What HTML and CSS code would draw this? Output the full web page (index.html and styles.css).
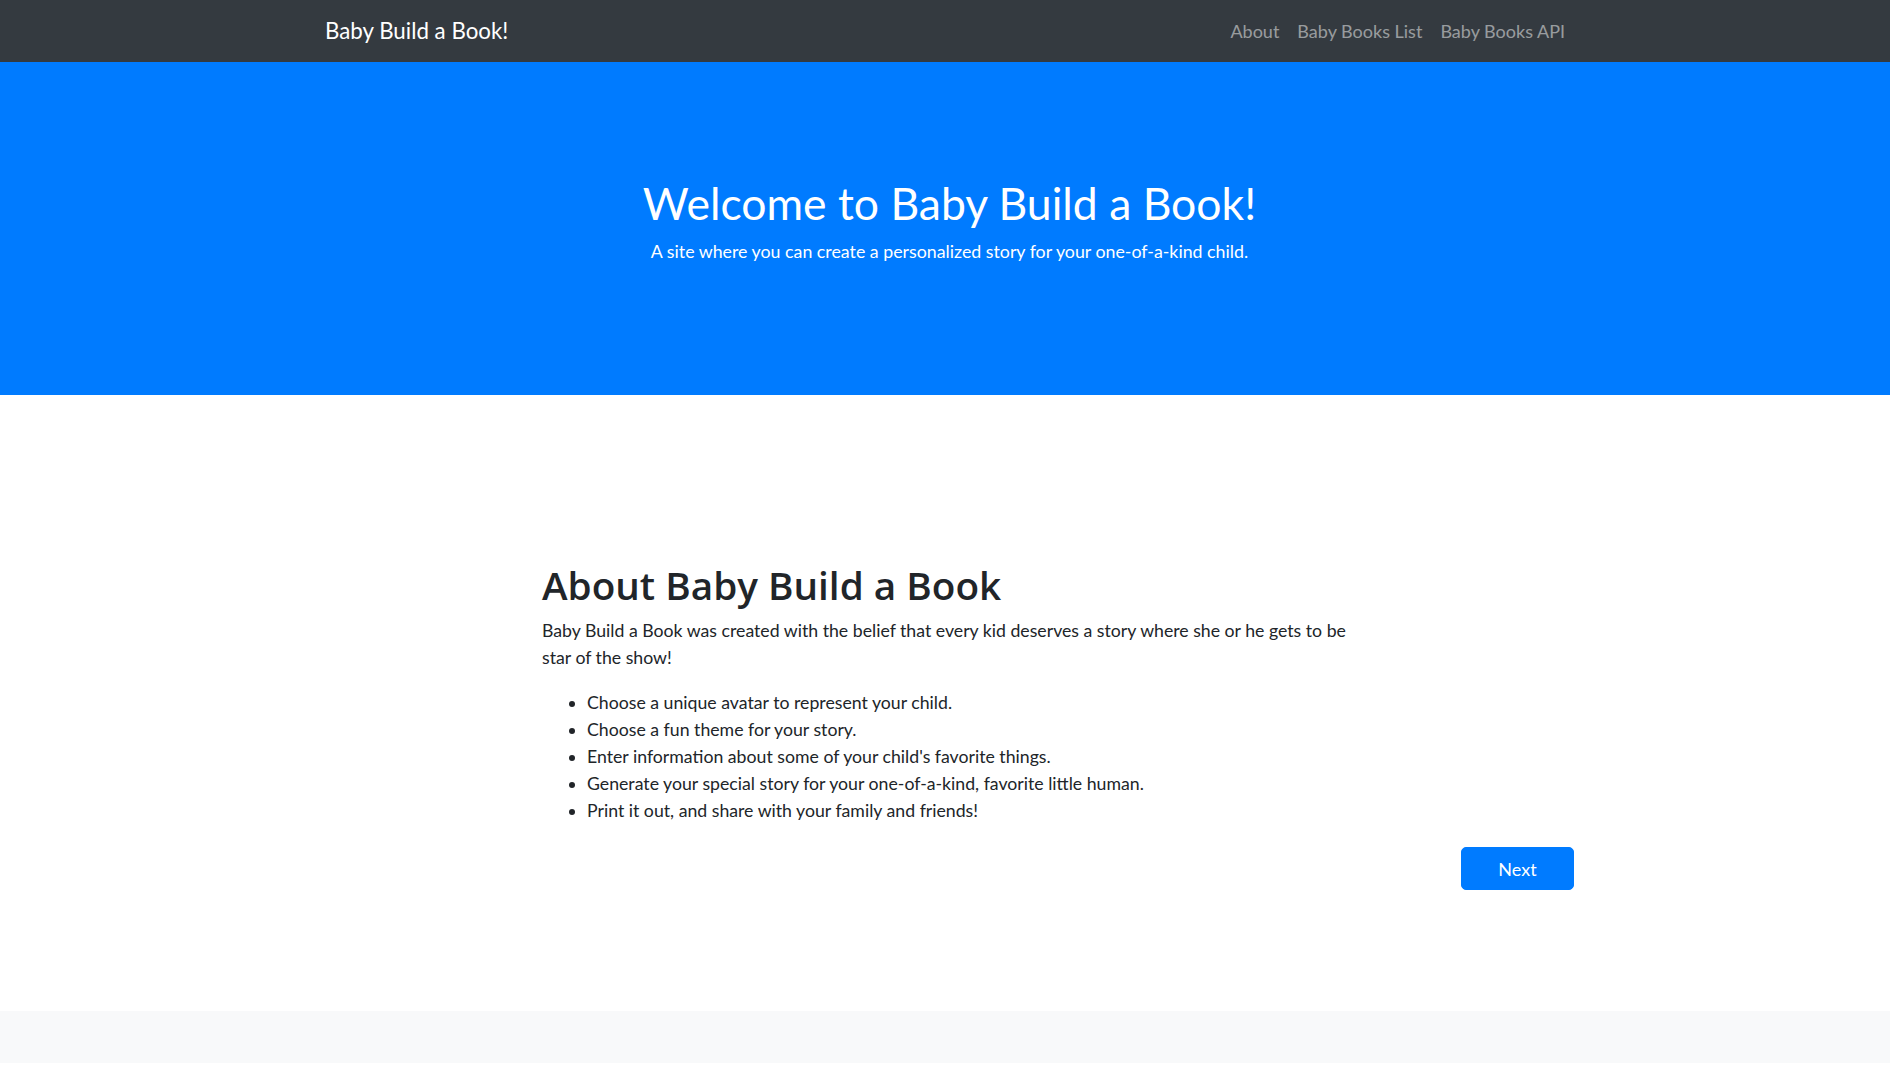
FILE: index.html
```html
<!DOCTYPE html>
<html lang="en">
<head>
<meta charset="utf-8">
<title>Baby Build a Book!</title>
<link rel="stylesheet" href="styles.css">
</head>
<body>
<nav class="navbar">
  <div class="nav-inner">
    <a class="brand" href="#">Baby Build a Book!</a>
    <ul class="nav-links">
      <li><a href="#">About</a></li>
      <li><a href="#">Baby Books List</a></li>
      <li><a href="#">Baby Books API</a></li>
    </ul>
  </div>
</nav>
<header class="hero">
  <h1 class="hero-title">Welcome to Baby Build a Book!</h1>
  <p class="hero-lead">A site where you can create a personalized story for your one-of-a-kind child.</p>
</header>
<main class="main">
  <div class="row">
    <section class="about">
      <div class="about-text">
        <h2 class="about-title">About Baby Build a Book</h2>
        <p>Baby Build a Book was created with the belief that every kid deserves a story where she or he gets to be star of the show!</p>
        <ul class="steps">
          <li>Choose a unique avatar to represent your child.</li>
          <li>Choose a fun theme for your story.</li>
          <li>Enter information about some of your child's favorite things.</li>
          <li>Generate your special story for your one-of-a-kind, favorite little human.</li>
          <li>Print it out, and share with your family and friends!</li>
        </ul>
      </div>
      <div class="actions">
        <button class="btn-next" type="button">Next</button>
      </div>
    </section>
  </div>
</main>
<footer class="footer"></footer>
</body>
</html>
```

FILE: styles.css
```css
* { box-sizing: border-box; }

html, body {
  margin: 0;
  padding: 0;
}

body {
  font-family: Lato, "Open Sans", "Liberation Sans", sans-serif;
  font-size: 17.7px;
  line-height: 27px;
  color: #212529;
  background: #fff;
}

.navbar {
  background: #343a40;
  height: 62px;
}

.nav-inner {
  width: 1248px;
  margin: 0 auto;
  height: 100%;
  display: flex;
  align-items: center;
  justify-content: space-between;
}

.brand {
  color: #fff;
  text-decoration: none;
  font-size: 22.3px;
  line-height: 1;
  padding-left: 4px;
}

.nav-links {
  list-style: none;
  margin: 0 -5px 0 0;
  padding: 0;
  display: flex;
}

.nav-links a {
  display: block;
  color: rgba(255, 255, 255, 0.5);
  text-decoration: none;
  font-size: 18px;
  padding: 0 9px;
}

.hero {
  background: #007bff;
  color: #fff;
  height: 333px;
  text-align: center;
  padding-top: 114px;
  padding-left: 9px;
}

.hero-title {
  margin: 0;
  font-size: 44.5px;
  font-weight: 400;
  line-height: 1.2;
}

.hero-lead {
  margin: 9px 0 0;
  font-size: 17.8px;
}

.main {
  height: 616px;
  padding-top: 167px;
}

.row {
  width: calc(100% + 15px);
}

.about {
  width: 1032px;
  margin-left: calc((100% - 15px) / 2 - 403px);
}

.about-text {
  max-width: 820px;
}

.about-title {
  font-family: "Open Sans", Lato, sans-serif;
  font-weight: 600;
  font-size: 38.7px;
  line-height: 1.2;
  margin: 0 0 9px;
}

.about-text p {
  margin: 0 0 18px;
}

.steps {
  margin: 0 0 18px;
  padding-left: 45px;
}

.actions {
  display: flex;
  justify-content: flex-end;
}

.btn-next {
  font-family: inherit;
  font-size: 18px;
  color: #fff;
  background: #007bff;
  border: 1px solid #007bff;
  border-radius: 5px;
  width: 113px;
  height: 43px;
  margin-top: 5px;
  cursor: pointer;
}

.footer {
  background: #f8f9fa;
  height: 52px;
}
```
